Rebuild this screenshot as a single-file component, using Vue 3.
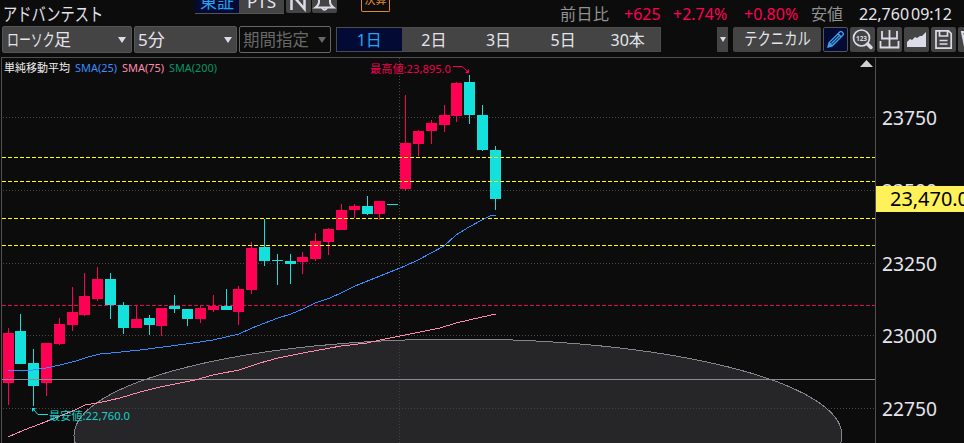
<script setup>
import { computed, ref } from "vue";

const ranges = ["1日", "2日", "3日", "5日", "30本"];
const activeRange = ref("1日");

// 価格目盛
const priceLabels = [
  { text: "23750", y: 117 },
  { text: "23500", y: 190 },
  { text: "23250", y: 263 },
  { text: "23000", y: 335 },
  { text: "22750", y: 408 },
];
const yellowLines = [157, 181, 218, 245];

// [左端, 芯の位置, 高値, 実体上, 実体下, 安値, 陽線かどうか]
const rows = [
  [3, 8, 328, 333, 383, 405, 1],
  [15, 20, 314, 331, 364, 364, 0],
  [28, 33, 349, 363, 386, 406, 0],
  [41, 46, 343, 343, 383, 396, 1],
  [54, 59, 318, 324, 344, 345, 1],
  [67, 72, 287, 312, 325, 331, 1],
  [79, 84, 273, 296, 315, 316, 1],
  [92, 97, 267, 279, 299, 301, 1],
  [105, 110, 273, 279, 305, 319, 0],
  [118, 123, 302, 305, 328, 334, 0],
  [131, 136, 306, 319, 328, 328, 1],
  [144, 149, 315, 318, 325, 335, 0],
  [156, 161, 308, 308, 326, 336, 1],
  [169, 174, 295, 306, 309, 313, 0],
  [182, 187, 309, 309, 319, 326, 0],
  [195, 200, 306, 308, 319, 323, 1],
  [208, 213, 295, 306, 310, 312, 1],
  [221, 226, 289, 306, 310, 310, 0],
  [233, 238, 286, 289, 312, 325, 1],
  [246, 251, 242, 248, 290, 294, 1],
  [259, 264, 219, 247, 261, 266, 0],
  [272, 277, 254, 260, 261, 285, 0],
  [285, 290, 254, 261, 264, 284, 0],
  [297, 302, 252, 257, 262, 274, 1],
  [310, 315, 233, 241, 259, 261, 1],
  [323, 328, 228, 229, 242, 255, 1],
  [336, 341, 204, 210, 230, 230, 1],
  [349, 354, 204, 206, 210, 218, 1],
  [362, 367, 196, 206, 214, 215, 0],
  [374, 379, 201, 201, 214, 220, 1],
  [387, 392, 204, 204, 205, 205, 0],
  [400, 405, 95, 143, 189, 191, 1],
  [413, 418, 130, 131, 144, 156, 1],
  [426, 431, 120, 123, 131, 144, 1],
  [439, 444, 105, 115, 125, 132, 1],
  [451, 456, 82, 83, 116, 122, 1],
  [464, 469, 75, 82, 115, 124, 0],
  [477, 482, 105, 115, 150, 151, 0],
  [490, 495, 146, 150, 199, 210, 0],
];
const candles = computed(() =>
  rows.map(([x, cx, high, top, bottom, low, up]) => ({
    x,
    cx,
    high,
    top,
    body: bottom - top,
    wick: low - high,
    className: up ? "up" : "down",
  }))
);

const sma25 =
  "8,371 20,370 33,370 46,368 60,365 76,361 88,357 100,354 116,352.5 140,350 163,347 190,343.5 213,340 226,337 239,334 252,328 265,323 278,318 291,314 303,309 315,303 330,298 341,293 355,286 370,280 390,272 405,266 418,260 431,253 444,246 456,235 469,227 482,220 490,216 496,215";
const sma75 =
  "8,437 24,430 40,424 60,416 75,410 85,405 100,402.5 120,398 140,392 160,387 195,380 213,375 239,370 260,363 278,358 303,353 341,346 367,343 380,340 400,336 440,328 456,323 469,320 482,317 496,314";
</script>

<template>
  <div class="screen">
    <header class="quote">
      <div class="name"><span>アドバンテスト</span></div>
      <div class="markets">
        <span class="market selected">東証</span>
        <span class="market">PTS</span>
      </div>
      <div class="square">
        <svg width="25" height="13" viewBox="0 0 25 13">
          <path d="M5.500 10V-6L18.500 9V-6" fill="none" stroke="#dcdce8" stroke-width="2.500" />
        </svg>
      </div>
      <div class="square">
        <svg width="25" height="13" viewBox="0 0 25 13">
          <path d="M7 -2V2Q7 5 3.500 7.500H21.500Q18 5 18 2V-2" fill="none" stroke="#dcdce8" stroke-width="2" />
          <path d="M10 8Q12.500 11.500 15 8" fill="none" stroke="#dcdce8" stroke-width="2" />
        </svg>
      </div>
      <div class="earnings"><span>決算</span></div>
      <div class="numbers">
        <span class="label diff-label">前日比</span>
        <span class="plus diff">+625</span>
        <span class="plus rate">+2.74%</span>
        <span class="plus rate2">+0.80%</span>
        <span class="label low-label">安値</span>
        <span class="low">22,760</span>
        <span class="time">09:12</span>
      </div>
    </header>

    <nav class="toolbar">
      <div class="select kind">
        <span class="kind-label"><span class="kana">ローソク</span>足</span>
        <i class="arrow"></i>
      </div>
      <div class="select minutes"><span>5分</span><i class="arrow"></i></div>
      <div class="select period"><span>期間指定</span><i class="arrow"></i></div>
      <div class="ranges">
        <button
          v-for="range in ranges"
          :key="range"
          :class="{ active: range === activeRange }"
          type="button"
          @click="activeRange = range"
        >
          {{ range }}
        </button>
      </div>
      <div class="more"><i class="arrow"></i></div>
      <div class="technical"><span>テクニカル</span></div>
      <div class="tools">
        <!-- 描画 -->
        <div class="tool pencil">
          <svg width="23" height="23" viewBox="0 0 23 23">
            <g fill="none" stroke="#3da5f0" stroke-width="1.300">
              <path d="M4 19L5.200 14.500L16 3.700Q17 3 18 4L19 5Q20 6 19 7L8.200 17.800Z" />
              <path d="M14 5.700L17.300 9M5.200 14.500L8.200 17.800M7.500 15.500L15.500 7.500" />
            </g>
            <path d="M4 19l1-3.500 2.500 2.500z" fill="#3da5f0" />
          </svg>
        </div>
        <!-- 数値検索 -->
        <div class="tool">
          <svg width="25" height="25" viewBox="0 0 25 25">
            <circle cx="11.500" cy="11" r="8" fill="none" stroke="#dcdce8" stroke-width="1.700" />
            <path d="M17.500 17L21 20.500" stroke="#dcdce8" stroke-width="3.500" stroke-linecap="round" />
            <text class="digits" x="11.500" y="13.500" text-anchor="middle">123</text>
          </svg>
        </div>
        <!-- 出来高 -->
        <div class="tool">
          <svg width="25" height="25" viewBox="0 0 25 25">
            <path
              d="M12.500 3V21M5 4V11.500H20V4M3.500 14V21.500M21.500 14V21.500M3.500 20.500H21.500"
              fill="none"
              stroke="#dcdce8"
              stroke-width="1.800"
            />
          </svg>
        </div>
        <!-- 面グラフ -->
        <div class="tool">
          <svg width="25" height="25" viewBox="0 0 25 25">
            <path d="M3 20V15L6 12L8 13L11 10L13 11L16 9L18 9L22 5V20Z" fill="#dcdce8" />
          </svg>
        </div>
        <!-- 保存 -->
        <div class="tool">
          <svg width="25" height="25" viewBox="0 0 25 25">
            <g fill="none" stroke="#dcdce8" stroke-width="1.700">
              <path d="M5 3.800H17.500L20.200 6.500V21.200H5Z" />
              <path d="M8.500 4V9H16.500V4M8.500 13.500H16.500M8.500 17H16.500" />
            </g>
          </svg>
        </div>
        <div class="tool">
          <svg width="25" height="25" viewBox="0 0 25 25">
            <path d="M4 5H22V20H7ZM4 5L7 16" fill="none" stroke="#dcdce8" stroke-width="2" />
          </svg>
        </div>
      </div>
    </nav>

    <svg class="chart" width="964" height="386" viewBox="0 57 964 386">
      <!-- 目盛線 -->
      <g class="grid">
        <line v-for="p in priceLabels" :key="p.y" x1="3" x2="875" :y1="p.y + 0.5" :y2="p.y + 0.5" />
        <line x1="399.500" x2="399.500" y1="58" y2="443" />
      </g>
      <ellipse class="zone" cx="458" cy="435.500" rx="384" ry="96.500" />
      <line class="frame" x1="1" x2="964" y1="57.500" y2="57.500" />
      <line class="frame" x1="1.500" x2="1.500" y1="57" y2="443" />
      <line class="frame" x1="875.500" x2="875.500" y1="57" y2="443" />

      <line class="prev" x1="2" x2="875" y1="305.500" y2="305.500" />

      <g v-for="c in candles" :key="c.x" :class="c.className" shape-rendering="crispEdges">
        <rect :x="c.cx" :y="c.high" width="1" :height="c.wick" />
        <rect :x="c.x" :y="c.top" width="11" :height="c.body" />
      </g>

      <line
        v-for="y in yellowLines"
        :key="y"
        class="alert"
        x1="2"
        x2="875"
        :y1="y + 0.5"
        :y2="y + 0.5"
      />
      <line class="level" x1="2" x2="875" y1="379.500" y2="379.500" />
      <polyline class="sma blue" :points="sma25" />
      <polyline class="sma pink" :points="sma75" />

      <!-- 凡例 -->
      <g class="small">
        <text x="4" y="72" textLength="66" fill="#f0f0f0">単純移動平均</text>
        <text x="75" y="72" textLength="42" lengthAdjust="spacingAndGlyphs" fill="#3b8bff">SMA(25)</text>
        <text x="122" y="72" textLength="42" lengthAdjust="spacingAndGlyphs" fill="#ff8cab">SMA(75)</text>
        <text x="169" y="72" textLength="48" lengthAdjust="spacingAndGlyphs" fill="#079466">SMA(200)</text>
      </g>

      <!-- 最高値と最安値 -->
      <g class="small">
        <text x="370" y="73" textLength="81" lengthAdjust="spacingAndGlyphs" fill="#f00050">最高値:23,895.0</text>
        <path d="M453 66.500H462L467 71" fill="none" stroke="#ff0055" />
        <path d="M469 69V73H465Z" fill="#ff0055" />
        <text x="49" y="420" textLength="81" lengthAdjust="spacingAndGlyphs" fill="#17cfc9">最安値:22,760.0</text>
        <path d="M48 414.500H38L34 410" fill="none" stroke="#14e0dc" />
        <path d="M32 412V408H36Z" fill="#14e0dc" />
      </g>

      <path d="M866.500 60L873 67H860Z" fill="#d0d0d4" />

      <!-- 価格軸 -->
      <text
        v-for="p in priceLabels"
        :key="p.text"
        class="price"
        x="882"
        :y="p.y + 7.500"
        textLength="55"
        lengthAdjust="spacingAndGlyphs"
      >
        {{ p.text }}
      </text>
      <rect x="876" y="186" width="88" height="26" fill="#fff15a" />
      <text class="price current" x="890" y="206" textLength="79" lengthAdjust="spacingAndGlyphs">23,470.0</text>
    </svg>
  </div>
</template>

<style>
body {
  margin: 0;
  background: #0c0c0c;
}
</style>

<style scoped>
.screen {
  width: 964px;
  height: 443px;
  overflow: hidden;
  background: #0c0c0c;
  color: #e4e4ec;
  font-family: "Noto Sans", "Noto Sans CJK JP", sans-serif;
  font-size: 16px;
}
.quote {
  display: flex;
  align-items: flex-start;
  height: 26px;
  overflow: hidden;
  white-space: nowrap;
}
.quote > * {
  flex: none;
}
.name {
  width: 192px;
  padding: 2px 0 0 3px;
  box-sizing: border-box;
  margin-right: 3px;
  font-size: 18px;
  line-height: 24px;
}
.name span {
  display: inline-block;
  transform: scaleX(0.79);
  transform-origin: left;
}
.markets {
  display: flex;
  height: 13px;
  margin-right: 2px;
  border-bottom: 1px solid #555;
  overflow: hidden;
}
.market {
  width: 45px;
  height: 24px;
  margin-top: -10px;
  background: #444;
  font-size: 17px;
  line-height: 24px;
  text-align: center;
}
.market.selected {
  width: 44px;
  background: #030b35;
  color: #20a5f5;
}
.square {
  width: 25px;
  height: 13px;
  margin-right: 1px;
  border-radius: 0 0 2px 2px;
  background: #444;
}
.square svg,
.tool svg {
  display: block;
}
.earnings {
  box-sizing: border-box;
  width: 29px;
  height: 12px;
  margin-left: 23px;
  border: 1px solid #e58a25;
  border-top: 0;
  border-radius: 0 0 2px 2px;
  color: #e58a25;
  font-size: 11px;
  line-height: 16px;
  text-align: center;
  overflow: hidden;
}
.earnings span {
  display: block;
  margin-top: -8px;
}
.numbers {
  display: flex;
  margin-left: 170px;
  padding-top: 2px;
  line-height: 24px;
}
.label {
  color: #929292;
}
.plus {
  color: #ff0055;
}
.diff-label {
  width: 64px;
  letter-spacing: 0.5px;
}
.diff {
  width: 49px;
}
.rate {
  width: 71px;
}
.rate2 {
  width: 67px;
}
.low-label {
  width: 48px;
}
.low {
  width: 52px;
}
.toolbar {
  display: flex;
  align-items: center;
  height: 27px;
  padding-left: 2px;
  margin-bottom: 4px;
  font-size: 17px;
  white-space: nowrap;
}
.toolbar > * {
  flex: none;
}
.select {
  display: flex;
  justify-content: space-between;
  align-items: center;
  box-sizing: border-box;
  height: 27px;
  margin-right: 2px;
  padding: 0 5px 0 4px;
  border: 1px solid #555;
  border-radius: 2px;
  background: #444;
  line-height: 24px;
}
.kind {
  width: 130px;
}
.kind-label {
  display: flex;
}
.kana {
  width: 47px;
  transform: scaleX(0.7);
  transform-origin: left;
}
.minutes {
  width: 103px;
  padding: 0 4px 0 3px;
}
.period {
  width: 92px;
  margin-right: 5px;
  padding: 0 4px 0 3px;
  border-color: #666;
  background: #0c0c0c;
  color: #686868;
  font-size: 16.500px;
}
.arrow {
  width: 0;
  height: 0;
  border: 4.500px solid transparent;
  border-top: 6px solid #dcdce8;
  border-bottom: 0;
}
.period .arrow {
  border-top-color: #686868;
}
.ranges {
  display: flex;
  box-sizing: border-box;
  width: 325px;
  height: 25px;
  margin-right: 56px;
  border: 1px solid #4c4c4c;
}
.ranges button {
  flex: 1;
  padding: 0;
  border: 0;
  background: #444;
  color: #e4e4ec;
  font: inherit;
  font-size: 16px;
  line-height: 22px;
}
.ranges .active {
  background: #030b35;
  color: #20a5f5;
}
.more {
  display: flex;
  justify-content: center;
  align-items: center;
  width: 11px;
  height: 25px;
  margin-right: 5px;
  background: #444;
}
.more .arrow {
  border-width: 5px 3.500px 0;
}
.technical {
  width: 88px;
  height: 25px;
  margin-right: 2px;
  border-radius: 2px;
  background: #444;
  line-height: 24px;
  text-align: center;
}
.technical span {
  display: inline-block;
  margin: 0 -10px;
  transform: scaleX(0.78);
}
.tools {
  display: flex;
  gap: 2px;
}
.tool {
  flex: none;
  width: 25px;
  height: 25px;
  border-radius: 2px;
  background: #444;
}
.pencil {
  box-sizing: border-box;
  border: 1px solid #555;
  background: #030b35;
}
.digits {
  fill: #dcdce8;
  font-size: 6.500px;
  font-weight: bold;
}
.chart {
  display: block;
}
.grid line {
  stroke: #484848;
  stroke-dasharray: 1 2;
}
.zone {
  fill: rgba(60, 60, 64, 0.550);
  stroke: #858590;
  shape-rendering: crispEdges;
}
.frame {
  stroke: #505050;
}
.prev {
  stroke: #e00a4d;
  stroke-dasharray: 4 2;
}
.up {
  fill: #ff0055;
}
.down {
  fill: #14e0dc;
}
.alert {
  stroke: #ffff00;
  stroke-dasharray: 4 2;
}
.level {
  stroke: #8a8a92;
}
.sma {
  fill: none;
  shape-rendering: crispEdges;
}
.blue {
  stroke: #3b8bff;
}
.pink {
  stroke: #ff8cab;
}
.small {
  font-size: 11px;
}
.price {
  fill: #e4e4ec;
  font-size: 19.500px;
}
.current {
  fill: #000;
}
</style>
